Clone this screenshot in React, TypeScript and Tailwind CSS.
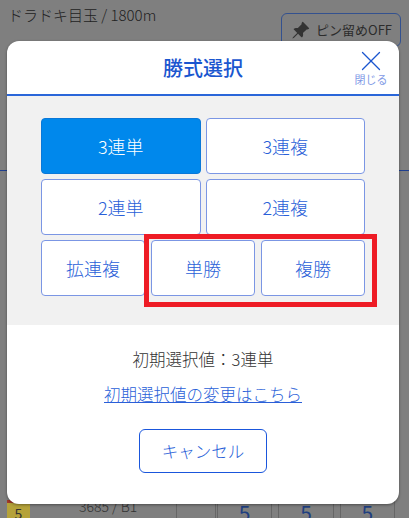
import { X } from "lucide-react";
import { BsPinAngleFill } from "react-icons/bs";

const font = "font-['Noto_Sans_CJK_JP','Noto_Sans',sans-serif]";
const btn =
	"flex items-center justify-center h-[56px] rounded-[4px] border border-[#7b96e4] bg-white text-[18px] font-light text-[#2a5fd8]";

export default function App() {
	return (
		<div className={`relative w-[409px] h-[518px] overflow-hidden bg-[#7f7f7f] ${font}`}>
			{/* Page behind the dialog */}
			<div className="flex justify-between h-[170px] pl-[8px] pr-[8px] pt-[5px]">
				<span className="text-[15px] font-light leading-[20px] text-[#222]">ドラドキ目玉 / 1800m</span>
				<div className="mt-[8px] flex items-center gap-[6px] w-[120px] h-[34px] pl-[9px] rounded-[6px] border border-[#33518f] text-[13px] whitespace-nowrap text-[#2c2c2c]">
					<BsPinAngleFill className="w-[19px] h-[19px] shrink-0 text-[#333]" />
					ピン留めOFF
				</div>
			</div>
			<div className="h-px bg-[#1f3f8f]" />
			<div className="flex mt-[329px] ml-[7px] mr-[14px] h-[18px] text-[#333]">
				<div className="w-[23px] bg-[#b5a23a] border-t-[3px] border-[#a33a2a] text-center text-[14px] leading-[21px]">5</div>
				<span className="ml-[49px] -mt-[4px] w-[97px] text-[14px] font-light leading-[20px]">3685 / B1</span>
				<div className="w-[40px] border-x border-[#666]" />
				<div className="ml-[1px] flex-1 flex gap-[6px] text-[21px] leading-[24px] text-[#1f3f80]">
					<span className="flex-1 border-x border-[#666] text-center">5</span>
					<span className="flex-1 border-x border-[#666] text-center">5</span>
					<span className="flex-1 border-x border-[#666] text-center">5</span>
				</div>
			</div>

			{/* Dialog */}
			<div className="absolute left-[7px] top-[41px] w-[392px] h-[463px] flex flex-col overflow-hidden rounded-[12px] bg-white shadow-[0_1px_3px_rgba(0,0,0,0.4)]">
				<div className="relative flex items-center justify-center h-[55px] shrink-0 border-b-2 border-[#2a66d9]">
					<h1 className="text-[20px] font-medium text-[#1a56cf]">勝式選択</h1>
					<div className="absolute right-[11px] top-[3px] flex flex-col items-center">
						<X className="w-[34px] h-[34px] text-[#1a56cf]" strokeWidth={0.9} />
						<span className="-mt-[5px] text-[11px] leading-[12px] text-[#7f9ae6]">閉じる</span>
					</div>
				</div>

				<div className="relative flex flex-col gap-[5px] shrink-0 h-[229px] bg-[#f1f1f1] px-[34px] pt-[22px]">
					<div className="grid grid-cols-2 gap-[5px]">
						<div className={`${btn} !bg-[#0088ec] !border-[#0a78d8] !text-white`}>3連単</div>
						<div className={btn}>3連複</div>
						<div className={btn}>2連単</div>
						<div className={btn}>2連複</div>
					</div>
					<div className="flex gap-[6px]">
						<div className={`${btn} w-[105px]`}>拡連複</div>
						<div className={`${btn} w-[105px]`}>単勝</div>
						<div className={`${btn} w-[105px]`}>複勝</div>
					</div>
					{/* Red highlight */}
					<div className="absolute left-[137px] top-[138px] w-[233px] h-[73px] border-[5px] border-[#ee1c25]" />
				</div>

				<div className="flex flex-col items-center flex-1 pt-[23px]">
					<p className="text-[16.5px] font-light leading-[22px] text-[#333]">初期選択値：3連単</p>
					<a className="mt-[13px] text-[16.5px] font-light leading-[22px] text-[#2a5fd8] underline">初期選択値の変更はこちら</a>
					<div className="mt-[24px] flex items-center justify-center w-[128px] h-[44px] rounded-[6px] border border-[#1a56dc] text-[16.5px] font-light text-[#2a5fd8]">キャンセル</div>
				</div>
			</div>
		</div>
	);
}
